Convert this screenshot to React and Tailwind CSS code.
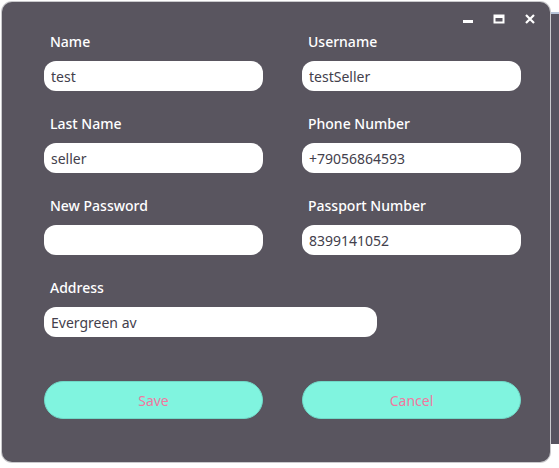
const fields = [
  { label: "Name", value: "test" },
  { label: "Username", value: "testSeller" },
  { label: "Last Name", value: "seller" },
  { label: "Phone Number", value: "+79056864593" },
  { label: "New Password", value: "", type: "password" },
  { label: "Passport Number", value: "8399141052" },
];

function Field({ label, value, type = "text", wide }) {
  return (
    <div className="flex flex-col">
      <label className="h-[20px] pl-[6px] text-[14px] leading-[20px] font-medium text-white">
        {label}
      </label>
      <input
        type={type}
        defaultValue={value}
        className={
          "mt-[9px] h-[30px] rounded-[12px] bg-white px-[7px] text-[14px] text-[#43404c] outline-none " +
          (wide ? "w-[333px]" : "w-[219px]")
        }
      />
    </div>
  );
}

function WindowButtons() {
  return (
    <div className="flex h-[30px] items-center justify-end gap-[19px] pr-[14px] pt-[4px]">
      <svg width="12" height="12" viewBox="0 0 12 12">
        <rect x="1" y="7" width="10" height="3" fill="white" />
      </svg>
      <svg width="12" height="12" viewBox="0 0 12 12">
        <rect x="1.5" y="2.5" width="9" height="7" fill="none" stroke="white" strokeWidth="2" />
        <rect x="1" y="2" width="10" height="3" fill="white" />
      </svg>
      <svg width="12" height="12" viewBox="0 0 12 12">
        <path d="M2 2 L10 10 M10 2 L2 10" stroke="white" strokeWidth="2.2" />
      </svg>
    </div>
  );
}

export default function App() {
  return (
    <div
      className="relative h-[468px] w-[559px] overflow-hidden bg-white pl-[2px] pt-[2px]"
      style={{ fontFamily: '"Noto Sans", "Open Sans", sans-serif' }}
    >
      {/* window sitting behind on the right */}
      <div className="absolute left-[551px] top-[12px] h-[432px] w-[10px] border-t-2 border-[#b7c4d8] bg-[#57535f]" />

      <div className="relative h-[460px] w-[548px] rounded-[10px] bg-[#59555f] shadow-[0_0_0_1px_#c9c9cc]">
        <WindowButtons />
        <div className="pl-[42px]">
          <div className="grid grid-cols-[219px_219px] gap-x-[39px] gap-y-[23px]">
            {fields.map((f) => (
              <Field key={f.label} {...f} />
            ))}
            <div className="col-span-2">
              <Field label="Address" value="Evergreen av" wide />
            </div>
          </div>
          <div className="mt-[44px] flex gap-[39px]">
            <button className="h-[38px] w-[219px] rounded-full border border-[#6fd9c7] bg-[#80f4df] text-[14px] text-[#f0789f]">
              Save
            </button>
            <button className="h-[38px] w-[219px] rounded-full border border-[#6fd9c7] bg-[#80f4df] text-[14px] text-[#f0789f]">
              Cancel
            </button>
          </div>
        </div>
      </div>
    </div>
  );
}
